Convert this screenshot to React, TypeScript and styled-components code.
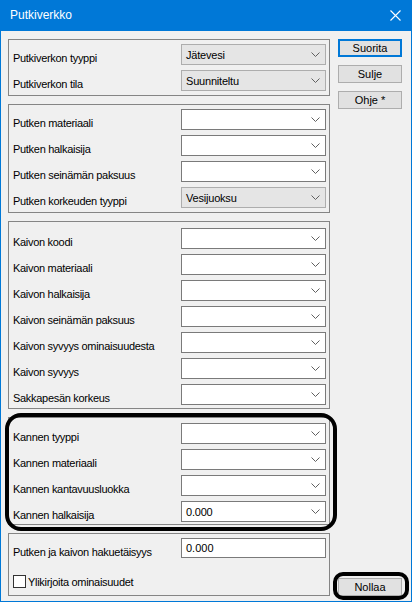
import React from "react";
import styled, { createGlobalStyle, css } from "styled-components";

const GlobalStyle = createGlobalStyle`
  html, body { margin: 0; padding: 0; background: #f0f0f0; }
  body { font-family: "Liberation Sans", Arial, sans-serif; font-size: 11px; color: #000; }
  * { box-sizing: border-box; }
`;

const Window = styled.div`
  width: 412px;
  height: 602px;
  border: 1px solid #0078d7;
  border-top: none;
  background: #f0f0f0;
  display: flex;
  flex-direction: column;
`;

const TitleBar = styled.div`
  height: 31px;
  margin: 0 -1px;
  background: #0078d7;
  color: #fff;
  display: flex;
  align-items: center;
  justify-content: space-between;
  padding: 0 11px 1px 10px;
  font-size: 12px;
`;

const Body = styled.div`
  flex: 1;
  display: flex;
  gap: 8px;
  padding: 8px 0 5px 7px;
`;

const LeftColumn = styled.div`
  width: 322px;
  display: flex;
  flex-direction: column;
  gap: 8px;
`;

const Group = styled.div<{ $pt: number; $pb: number; $highlight?: boolean }>`
  position: relative;
  border: 1px solid #858585;
  padding: ${(p) => p.$pt}px 3px ${(p) => p.$pb}px 4px;
  display: flex;
  flex-direction: column;
  gap: 5px;
  ${(p) =>
    p.$highlight &&
    css`
      &::after {
        content: "";
        position: absolute;
        top: -5px;
        left: -4px;
        right: -8px;
        bottom: -7px;
        border: 4px solid #000;
        border-radius: 16px;
        pointer-events: none;
      }
    `}
`;

const Row = styled.div`
  display: flex;
  align-items: flex-start;
  height: 21px;
`;

const Label = styled.span`
  flex: 1;
  padding-top: 8px;
  line-height: 13px;
  letter-spacing: -0.3px;
  white-space: nowrap;
`;

const Combo = styled.div<{ $list?: boolean }>`
  width: 145px;
  height: 21px;
  border: 1px solid ${(p) => (p.$list ? "#adadad" : "#7a7a7a")};
  background: ${(p) => (p.$list ? "#e5e5e5" : "#fff")};
  display: flex;
  align-items: center;
  justify-content: space-between;
  padding: 0 4px 0 4px;
  letter-spacing: -0.2px;
`;

const TextField = styled.div`
  width: 145px;
  height: 20px;
  border: 1px solid #7a7a7a;
  background: #fff;
  display: flex;
  align-items: center;
  padding-left: 4px;
`;

const CheckRow = styled.label`
  display: flex;
  align-items: center;
  gap: 2px;
  margin-top: 11px;
  letter-spacing: -0.3px;
`;

const CheckBox = styled.span`
  width: 13px;
  height: 13px;
  border: 1px solid #333;
  background: #fff;
  display: inline-block;
`;

const RightColumn = styled.div`
  width: 64px;
  display: flex;
  flex-direction: column;
  gap: 8px;
`;

const Button = styled.div<{ $default?: boolean; $highlight?: boolean }>`
  position: relative;
  height: 18px;
  background: #e1e1e1;
  border: ${(p) => (p.$default ? "2px solid #0078d7" : "1px solid #adadad")};
  display: flex;
  align-items: center;
  justify-content: center;
  padding-bottom: 1px;
  ${(p) =>
    p.$highlight &&
    css`
      margin-top: auto;
      &::after {
        content: "";
        position: absolute;
        top: -7px;
        left: -6px;
        right: -8px;
        bottom: -5px;
        border: 4px solid #000;
        border-radius: 10px;
        pointer-events: none;
      }
    `}
`;

const Chevron = () => (
  <svg width="9" height="5" viewBox="0 0 9 5" style={{ marginRight: 1 }}>
    <path d="M0.5 0.5 L4.5 4.5 L8.5 0.5" fill="none" stroke="#606060" strokeWidth="1" />
  </svg>
);

const CloseIcon = () => (
  <svg width="11" height="11" viewBox="0 0 11 11">
    <path d="M0.5 0.5 L10.5 10.5 M10.5 0.5 L0.5 10.5" stroke="#fff" strokeWidth="1.1" />
  </svg>
);

type Field = { label: string; value?: string; list?: boolean };

const FieldRow = ({ label, value, list }: Field) => (
  <Row>
    <Label>{label}</Label>
    <Combo $list={list}>
      <span>{value ?? ""}</span>
      <Chevron />
    </Combo>
  </Row>
);

const g1: Field[] = [
  { label: "Putkiverkon tyyppi", value: "Jätevesi", list: true },
  { label: "Putkiverkon tila", value: "Suunniteltu", list: true },
];
const g2: Field[] = [
  { label: "Putken materiaali" },
  { label: "Putken halkaisija" },
  { label: "Putken seinämän paksuus" },
  { label: "Putken korkeuden tyyppi", value: "Vesijuoksu", list: true },
];
const g3: Field[] = [
  { label: "Kaivon koodi" },
  { label: "Kaivon materiaali" },
  { label: "Kaivon halkaisija" },
  { label: "Kaivon seinämän paksuus" },
  { label: "Kaivon syvyys ominaisuudesta" },
  { label: "Kaivon syvyys" },
  { label: "Sakkapesän korkeus" },
];
const g4: Field[] = [
  { label: "Kannen tyyppi" },
  { label: "Kannen materiaali" },
  { label: "Kannen kantavuusluokka" },
  { label: "Kannen halkaisija", value: "0.000" },
];

export default function App() {
  return (
    <>
      <GlobalStyle />
      <Window>
        <TitleBar>
          <span>Putkiverkko</span>
          <CloseIcon />
        </TitleBar>
        <Body>
          <LeftColumn>
            <Group $pt={4} $pb={4}>
              {g1.map((f) => (
                <FieldRow key={f.label} {...f} />
              ))}
            </Group>
            <Group $pt={4} $pb={4}>
              {g2.map((f) => (
                <FieldRow key={f.label} {...f} />
              ))}
            </Group>
            <Group $pt={6} $pb={3}>
              {g3.map((f) => (
                <FieldRow key={f.label} {...f} />
              ))}
            </Group>
            <Group $pt={5} $pb={2} $highlight>
              {g4.map((f) => (
                <FieldRow key={f.label} {...f} />
              ))}
            </Group>
            <Group $pt={4} $pb={4} style={{ flex: 1 }}>
              <Row>
                <Label>Putken ja kaivon hakuetäisyys</Label>
                <TextField>0.000</TextField>
              </Row>
              <CheckRow>
                <CheckBox />
                <span>Ylikirjoita ominaisuudet</span>
              </CheckRow>
            </Group>
          </LeftColumn>
          <RightColumn>
            <Button $default>Suorita</Button>
            <Button>Sulje</Button>
            <Button>Ohje *</Button>
            <Button $highlight>Nollaa</Button>
          </RightColumn>
        </Body>
      </Window>
    </>
  );
}
